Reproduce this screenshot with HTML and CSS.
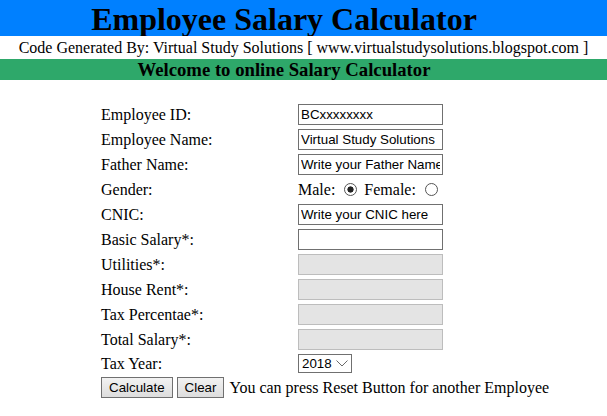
FILE: index.html
```html
<!DOCTYPE html>
<html>
<head>
<meta charset="utf-8">
<title>Employee Salary Calculator</title>
<link rel="stylesheet" href="styles.css">
</head>
<body>
<h1 class="banner">Employee Salary Calculator</h1>
<div class="credit">Code Generated By: Virtual Study Solutions [ www.virtualstudysolutions.blogspot.com ]</div>
<h3 class="welcome">Welcome to online Salary Calculator</h3>
<form class="calc">
  <label class="lbl">Employee ID:</label>
  <input class="field" type="text" value="BCxxxxxxxx">
  <label class="lbl">Employee Name:</label>
  <input class="field" type="text" value="Virtual Study Solutions">
  <label class="lbl">Father Name:</label>
  <input class="field" type="text" value="Write your Father Name">
  <label class="lbl">Gender:</label>
  <span class="gender">Male: <input class="radio" type="radio" name="g" checked> Female: <input class="radio" type="radio" name="g"></span>
  <label class="lbl">CNIC:</label>
  <input class="field" type="text" value="Write your CNIC here">
  <label class="lbl">Basic Salary*:</label>
  <input class="field" type="text" value="">
  <label class="lbl">Utilities*:</label>
  <input class="field off" type="text" disabled>
  <label class="lbl">House Rent*:</label>
  <input class="field off" type="text" disabled>
  <label class="lbl">Tax Percentae*:</label>
  <input class="field off" type="text" disabled>
  <label class="lbl">Total Salary*:</label>
  <input class="field off" type="text" disabled>
  <label class="lbl">Tax Year:</label>
  <span class="year">
    <select class="yearsel"><option>2018</option></select>
    <svg class="chev" width="12" height="7" viewBox="0 0 12 7"><polyline points="0.5,0.5 6,6 11.5,0.5" fill="none" stroke="#6a6a6a" stroke-width="1"/></svg>
  </span>
  <div class="actions">
    <button class="btn" type="button">Calculate</button>
    <button class="btn" type="reset">Clear</button>
    <span class="note">You can press Reset Button for another Employee</span>
  </div>
</form>
</body>
</html>
```
FILE: styles.css
```css
html, body {
  margin: 0;
  padding: 0;
  background: #fff;
  font-family: "Liberation Serif", "Times New Roman", serif;
  color: #000;
}

.banner {
  margin: 0;
  height: 36px;
  padding: 2px 39px 0 0;
  box-sizing: border-box;
  line-height: 34px;
  background: #0080ff;
  text-align: center;
  font-size: 32px;
  font-weight: bold;
  overflow: hidden;
}

.credit {
  height: 23px;
  line-height: 23px;
  font-size: 16px;
  text-align: center;
  white-space: nowrap;
}

.welcome {
  margin: 0;
  height: 21px;
  line-height: 21px;
  padding-right: 39px;
  background: #2ea86a;
  text-align: center;
  font-size: 18.72px;
  font-weight: bold;
}

.calc {
  display: grid;
  grid-template-columns: 197px auto;
  row-gap: 4px;
  align-items: center;
  justify-items: start;
  margin: 24px 0 0 101px;
}

.lbl {
  font-size: 16px;
  line-height: 18px;
}

.field {
  width: 145px;
  height: 21px;
  box-sizing: border-box;
  margin: 0;
  padding: 1px 2px;
  border: 1px solid #707070;
  border-radius: 0;
  background: #fff;
  font-family: "Liberation Sans", Arial, sans-serif;
  font-size: 13.33px;
  color: #000;
  outline: none;
}

.field.off {
  background: #e4e4e4;
  border-color: #bdbdbd;
}

.gender {
  height: 21px;
  line-height: 21px;
  font-size: 16px;
  white-space: nowrap;
}

.radio {
  appearance: none;
  -webkit-appearance: none;
  width: 13px;
  height: 13px;
  box-sizing: border-box;
  margin: 0 3px 0 5px;
  border: 1px solid #555;
  border-radius: 50%;
  background: #fff;
  vertical-align: -1px;
}

.radio:checked {
  background: radial-gradient(circle, #222 0, #222 2.8px, #fff 3.4px);
}

.year {
  position: relative;
  display: inline-block;
  height: 19px;
}

.yearsel {
  appearance: none;
  -webkit-appearance: none;
  width: 54px;
  height: 19px;
  box-sizing: border-box;
  margin: 0;
  padding: 0 0 0 3px;
  border: 1px solid #707070;
  border-radius: 0;
  background: #fff;
  font-family: "Liberation Sans", Arial, sans-serif;
  font-size: 13.33px;
  color: #000;
  display: block;
}

.chev {
  position: absolute;
  right: 4px;
  top: 6px;
  pointer-events: none;
}

.actions {
  grid-column: 1 / -1;
  display: flex;
  align-items: center;
  gap: 4px;
  height: 21px;
}

.btn {
  height: 21px;
  margin: 0;
  padding: 0 7px;
  border: 1px solid #707070;
  border-radius: 0;
  background: linear-gradient(#f2f2f2, #dddddd);
  font-family: "Liberation Sans", Arial, sans-serif;
  font-size: 13.33px;
  color: #000;
}

.note {
  margin-left: 1px;
  font-size: 16px;
  white-space: nowrap;
}
```
